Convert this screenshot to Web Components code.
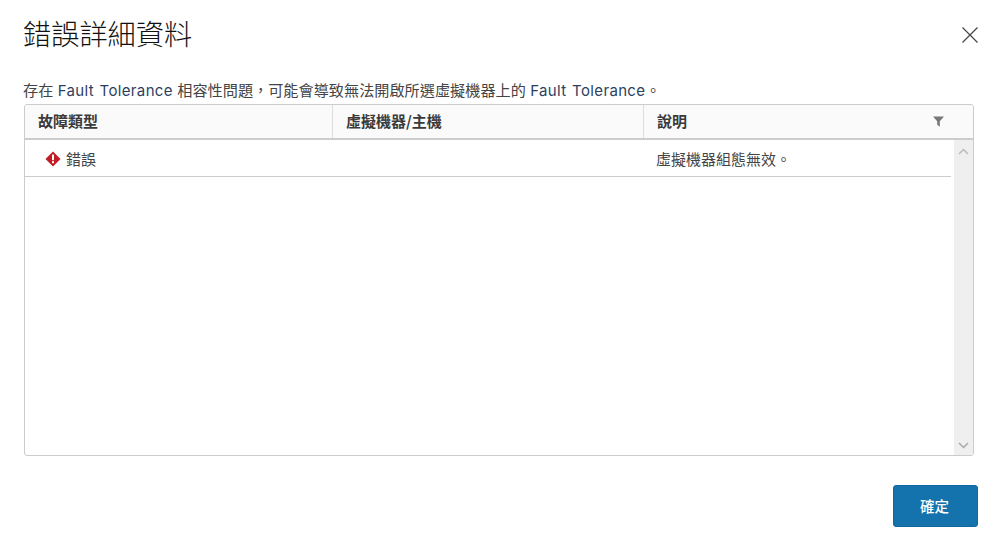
<!DOCTYPE html>
<html lang="zh-Hant"><head><meta charset="utf-8">
<style>html,body{margin:0;padding:0;background:#fff}</style>
</head><body>
<error-dialog>
  <span slot="title">錯誤詳細資料</span>
  <span slot="desc">存在 <fault-term>Fault Tolerance</fault-term> 相容性問題，可能會導致無法開啟所選虛擬機器上的 <fault-term>Fault Tolerance</fault-term>。</span>
  <fault-grid slot="grid"></fault-grid>
  <span slot="action">確定</span>
</error-dialog>
<script>
const CJK='"Noto Sans CJK TC","Noto Sans",sans-serif';
class FaultTerm extends HTMLElement{
  constructor(){super();this.attachShadow({mode:'open'}).innerHTML=`<style>
  :host{display:inline;font-family:Inter,${CJK};font-size:15px;letter-spacing:.35px;color:#2d3f5f}</style><slot></slot>`;}
}
class ErrorDialog extends HTMLElement{
  constructor(){super();this.attachShadow({mode:'open'}).innerHTML=`<style>
  :host{display:flex;flex-direction:column;width:1000px;height:540px;box-sizing:border-box;padding:0 22px 13px 23px;font-family:${CJK};color:#333}
  header{display:flex;justify-content:space-between;align-items:center;height:68px}
  .t{font-size:28.2px;line-height:36px;font-weight:300;color:#111;white-space:nowrap;margin-top:-3px}
  svg{display:block;margin-right:-1px;margin-top:2px}
  .d{font-size:15.17px;word-spacing:1px;line-height:20px;height:36px;padding-top:11px;box-sizing:border-box;white-space:nowrap;color:#444}
  ::slotted([slot=desc]){display:block}
  .g{margin-left:1px;margin-right:4px;height:352px;display:flex}
  .a{display:flex;justify-content:flex-end;margin-top:29px}
  button{all:unset;box-sizing:border-box;width:85px;height:42px;background:#1472ad;border-radius:3px;color:#fff;font:500 14.5px/40px ${CJK};text-align:center;border:1px solid #10689f;padding-right:2px}
  </style>
  <header><div class="t"><slot name="title"></slot></div>
  <svg width="18" height="18" viewBox="0 0 18 18"><path d="M1.500 1.500 16.500 16.500M16.500 1.500 1.500 16.500" stroke="#444" stroke-width="1.2" fill="none"/></svg></header>
  <div class="d"><slot name="desc"></slot></div>
  <div class="g"><slot name="grid"></slot></div>
  <div class="a"><button><slot name="action"></slot></button></div>`;}
}
class FaultGrid extends HTMLElement{
  constructor(){super();this.attachShadow({mode:'open'}).innerHTML=`<style>
  :host{display:flex;flex-direction:column;flex:1;box-sizing:border-box;border:1px solid #ccc;border-radius:3px;font-family:${CJK};font-size:15px;color:#444;overflow:hidden}
  .h{display:grid;grid-template-columns:307px 311px 1fr;height:35px;box-sizing:border-box;background:#fafafa;border-bottom:2px solid #ccc;flex:none}
  .h div{display:flex;align-items:center;justify-content:space-between;padding:0 13px 2px;font-weight:700;border-left:1px solid #ddd;color:#3a3a3a}
  .h div:first-child{border-left:0}
  .h svg{margin-right:16px;margin-top:2px}
  .b{flex:1;display:flex;min-height:0}
  .rows{flex:1;margin-right:3px}
  .r{display:grid;grid-template-columns:307px 311px 1fr;height:37px;box-sizing:border-box;border-bottom:1px solid #ccc;align-items:center}
  .c{padding:0 13px;display:flex;align-items:center;gap:5px}
  .c.e{padding-left:20px}
  .c svg{margin-top:2px}
  .sb{width:19px;background:#efefef;display:flex;flex-direction:column;justify-content:space-between;align-items:center;padding:8px 0 6px;box-sizing:border-box}
  </style>
  <div class="h"><div>故障類型</div><div>虛擬機器/主機</div><div>說明<svg width="11" height="11" viewBox="0 0 10 10"><path d="M0 .5H10L6.200 4.800V9.800L3.800 8V4.800Z" fill="#777"/></svg></div></div>
  <div class="b"><div class="rows"><div class="r">
    <div class="c e"><svg width="16" height="16" viewBox="0 0 16 16"><path d="M8 .5 15.500 8 8 15.500 .5 8Z" fill="#c21d25"/><rect x="7" y="3.600" width="2" height="5.600" fill="#fff"/><rect x="7" y="10.200" width="2" height="2" fill="#fff"/></svg><span>錯誤</span></div>
    <div class="c"></div><div class="c">虛擬機器組態無效。</div></div></div>
    <div class="sb"><svg width="11" height="7" viewBox="0 0 11 7"><path d="M1 6 5.500 1.500 10 6" fill="none" stroke="#bbb" stroke-width="1.500"/></svg><svg width="11" height="7" viewBox="0 0 11 7"><path d="M1 1 5.500 5.500 10 1" fill="none" stroke="#aaa" stroke-width="1.500"/></svg></div>
  </div>`;}
}
customElements.define('fault-term',FaultTerm);
customElements.define('error-dialog',ErrorDialog);
customElements.define('fault-grid',FaultGrid);
</script>
</body></html>
